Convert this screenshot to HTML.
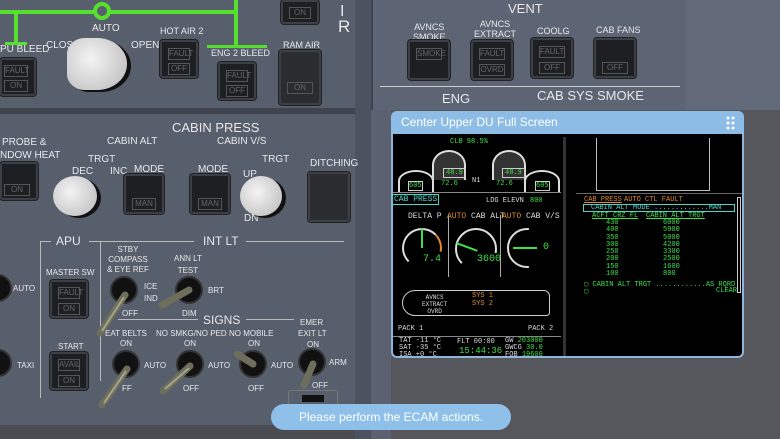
<!DOCTYPE html><html><head><style>
body{margin:0;width:780px;height:439px;overflow:hidden;background:#575e6c;font-family:"Liberation Sans",sans-serif;position:relative}
div,span{position:absolute;box-sizing:border-box}
.t{color:#e8e8ea;font-size:10px;white-space:nowrap}
.btn{background:#1d1f22;border:2px solid #3c3f45;border-radius:3px;box-shadow:0 0 0 1px #222}
.btn .a,.btn .b{left:6px;right:6px;border:1px solid #555;color:#666;font-size:8px;text-align:center;line-height:10px}
.knob{border-radius:50%;background:radial-gradient(circle at 40% 40%,#f4f4f4,#b8b8b8);box-shadow:4px 2px 0 #111}
.m{font-family:"Liberation Mono",monospace;font-size:7px;white-space:nowrap}
.g{color:#3ee04a}.o{color:#e08a2a}.w{color:#ddd}.c{color:#4cd6c9}
</style></head><body>
<!-- bottom right dark area -->
<div style="left:370px;top:110px;width:410px;height:329px;background:#56575c"></div>
<div style="left:0;top:425px;width:380px;height:14px;background:#4a4c52"></div>
<!-- panel seams -->
<div style="left:0;top:108px;width:375px;height:6px;background:#3e434d"></div>
<div style="left:355px;top:0;width:16px;height:439px;background:#4c5260"></div>
<div style="left:371px;top:0;width:409px;height:110px;background:#5d6474;border-left:2px solid #3f4450"></div>
<div style="left:371px;top:110px;width:20px;height:329px;background:#5b6170"></div>
<!-- green lines -->
<div style="left:0;top:10px;width:237px;height:4px;background:#55e030"></div>
<div style="left:234px;top:0;width:4px;height:46px;background:#55e030"></div>
<div style="left:207px;top:45px;width:60px;height:3px;background:#55e030"></div>
<div style="left:14px;top:12px;width:4px;height:30px;background:#55e030"></div>
<div style="left:5px;top:42px;width:22px;height:3px;background:#55e030"></div>
<div style="left:93px;top:2px;width:18px;height:18px;border:4px solid #55e030;border-radius:50%;background:#575e6c"></div>
<span class="t" style="left:92px;top:23px">AUTO</span>
<span class="t" style="left:46px;top:40px">CLOS</span><span class="t" style="left:131px;top:40px">OPEN</span>
<span class="t" style="left:0;top:44px">PU BLEED</span>
<span class="t" style="left:160px;top:26px;font-size:9px">HOT AIR 2</span>
<span class="t" style="left:211px;top:48px;font-size:9px">ENG 2 BLEED</span>
<span class="t" style="left:283px;top:40px;font-size:9px">RAM AIR</span>
<span class="t" style="left:340px;top:3px;font-size:16px">I</span><span class="t" style="left:338px;top:17px;font-size:17px">R</span>
<div class="btn" style="left:0;top:58px;width:36px;height:38px"><span class="a" style="top:5px;left:2px">FAULT</span><span class="b" style="top:20px;left:2px">ON</span></div>
<div class="knob" style="left:67px;top:38px;width:60px;height:52px;border-radius:30% 50% 50% 30%"></div>
<div class="btn" style="left:160px;top:40px;width:38px;height:38px"><span class="a" style="top:6px">FAULT</span><span class="b" style="top:21px">OFF</span></div>
<div class="btn" style="left:218px;top:62px;width:38px;height:38px"><span class="a" style="top:6px">FAULT</span><span class="b" style="top:21px">OFF</span></div>
<div class="btn" style="left:279px;top:50px;width:42px;height:55px;background:#2a2c30"><span class="b" style="top:30px">ON</span></div>
<div class="btn" style="left:281px;top:0;width:38px;height:24px"><span class="b" style="top:5px">ON</span></div>
<!-- cabin press -->
<span class="t" style="left:172px;top:120px;font-size:13px">CABIN PRESS</span>
<span class="t" style="left:107px;top:136px">CABIN ALT</span><span class="t" style="left:217px;top:136px">CABIN V/S</span>
<span class="t" style="left:2px;top:137px">PROBE &amp;</span><span class="t" style="left:0;top:150px">NDOW HEAT</span>
<span class="t" style="left:88px;top:154px">TRGT</span><span class="t" style="left:72px;top:166px">DEC</span><span class="t" style="left:110px;top:166px">INC</span>
<span class="t" style="left:134px;top:164px">MODE</span><span class="t" style="left:198px;top:164px">MODE</span>
<span class="t" style="left:262px;top:154px">TRGT</span><span class="t" style="left:243px;top:169px">UP</span><span class="t" style="left:244px;top:213px">DN</span>
<span class="t" style="left:310px;top:158px">DITCHING</span>
<div class="btn" style="left:0;top:162px;width:38px;height:38px"><span class="b" style="top:20px;left:2px">ON</span></div>
<div class="knob" style="left:53px;top:176px;width:44px;height:40px"></div>
<div class="btn" style="left:124px;top:174px;width:40px;height:40px"><span class="b" style="top:22px">MAN</span></div>
<div class="btn" style="left:190px;top:174px;width:40px;height:40px"><span class="b" style="top:22px">MAN</span></div>
<div class="knob" style="left:240px;top:176px;width:42px;height:40px"></div>
<div class="btn" style="left:308px;top:172px;width:42px;height:50px;background:#2a2c30"></div>
<!-- lower panel lines -->
<div style="left:40px;top:241px;width:1px;height:157px;background:#bbb"></div>
<div style="left:100px;top:241px;width:1px;height:140px;background:#bbb"></div>
<div style="left:40px;top:241px;width:11px;height:1px;background:#bbb"></div>
<div style="left:89px;top:241px;width:105px;height:1px;background:#bbb"></div>
<div style="left:246px;top:241px;width:98px;height:1px;background:#bbb"></div>
<div style="left:118px;top:319px;width:80px;height:1px;background:#bbb"></div>
<div style="left:246px;top:319px;width:48px;height:1px;background:#bbb"></div>
<span class="t" style="left:56px;top:234px;font-size:12px">APU</span><span class="t" style="left:203px;top:234px;font-size:12px">INT LT</span>
<span class="t" style="left:103px;top:245px;font-size:8px;line-height:10px;text-align:center;width:50px">STBY<br>COMPASS<br>&amp; EYE REF</span>
<span class="t" style="left:174px;top:253px;font-size:8px;line-height:12px;text-align:center">ANN LT<br>TEST</span>
<span class="t" style="left:46px;top:268px;font-size:8px">MASTER SW</span>
<div class="btn" style="left:50px;top:280px;width:38px;height:38px"><span class="a" style="top:5px">FAULT</span><span class="b" style="top:21px">ON</span></div>
<span class="t" style="left:144px;top:282px;font-size:8px">ICE</span><span class="t" style="left:144px;top:294px;font-size:8px">IND</span>
<span class="t" style="left:208px;top:286px;font-size:8px">BRT</span><span class="t" style="left:182px;top:309px;font-size:8px">DIM</span>
<span class="t" style="left:122px;top:309px;font-size:8px">OFF</span>
<span class="t" style="left:13px;top:284px;font-size:8px">AUTO</span>
<span class="t" style="left:203px;top:313px;font-size:12px">SIGNS</span>
<span class="t" style="left:105px;top:329px;font-size:8px">EAT BELTS</span><span class="t" style="left:156px;top:329px;font-size:8px">NO SMKG/NO PED</span><span class="t" style="left:229px;top:329px;font-size:8px">NO MOBILE</span>
<span class="t" style="left:300px;top:318px;font-size:8px">EMER</span><span class="t" style="left:298px;top:329px;font-size:8px">EXIT LT</span>
<span class="t" style="left:58px;top:342px;font-size:8px">START</span>
<div class="btn" style="left:50px;top:352px;width:38px;height:38px"><span class="a" style="top:5px">AVAIL</span><span class="b" style="top:21px">ON</span></div>
<span class="t" style="left:120px;top:339px;font-size:8px">ON</span><span class="t" style="left:184px;top:339px;font-size:8px">ON</span><span class="t" style="left:248px;top:339px;font-size:8px">ON</span><span class="t" style="left:307px;top:340px;font-size:8px">ON</span>
<span class="t" style="left:144px;top:361px;font-size:8px">AUTO</span><span class="t" style="left:208px;top:361px;font-size:8px">AUTO</span><span class="t" style="left:271px;top:361px;font-size:8px">AUTO</span><span class="t" style="left:329px;top:358px;font-size:8px">ARM</span>
<span class="t" style="left:17px;top:361px;font-size:8px">TAXI</span>
<span class="t" style="left:122px;top:384px;font-size:8px">FF</span><span class="t" style="left:183px;top:384px;font-size:8px">OFF</span><span class="t" style="left:248px;top:384px;font-size:8px">OFF</span><span class="t" style="left:312px;top:381px;font-size:8px">OFF</span>
<div style="left:288px;top:390px;width:50px;height:30px;border:1px solid #777;border-radius:3px"></div>
<div style="left:302px;top:395px;width:22px;height:7px;background:#111"></div>
<svg style="position:absolute;left:0;top:0" width="370" height="439">
<g fill="#111" stroke="#333" stroke-width="2">
<circle cx="124" cy="290" r="13"/><circle cx="189" cy="290" r="13"/>
<circle cx="126" cy="364" r="13"/><circle cx="190" cy="364" r="13"/><circle cx="253" cy="364" r="13"/><circle cx="312" cy="362" r="13"/>
<circle cx="-2" cy="288" r="13"/><circle cx="-2" cy="363" r="13"/>
</g>
<g stroke="#6e6e5c" stroke-width="7" stroke-linecap="round">
<line x1="125" y1="295" x2="100" y2="333"/><line x1="189" y1="290" x2="162" y2="305"/>
<line x1="127" y1="369" x2="102" y2="405"/><line x1="190" y1="366" x2="163" y2="391"/>
<line x1="253" y1="364" x2="237" y2="354"/><line x1="313" y1="364" x2="304" y2="385"/>
</g>
<g stroke="#a5a58e" stroke-width="2"><line x1="124" y1="297" x2="102" y2="331"/><line x1="126" y1="371" x2="104" y2="403"/><line x1="189" y1="368" x2="165" y2="389"/></g>
</svg>
<!-- vent panel -->
<span class="t" style="left:508px;top:1px;font-size:13px">VENT</span>
<span class="t" style="left:413px;top:22px;text-align:center;font-size:9px;line-height:10px">AVNCS<br>SMOKE</span>
<span class="t" style="left:474px;top:19px;text-align:center;font-size:9px;line-height:10px">AVNCS<br>EXTRACT</span>
<span class="t" style="left:537px;top:26px;font-size:9px">COOLG</span><span class="t" style="left:596px;top:25px;font-size:9px">CAB FANS</span>
<div class="btn" style="left:408px;top:40px;width:42px;height:40px"><span class="a" style="top:6px">SMOKE</span></div>
<div class="btn" style="left:471px;top:40px;width:42px;height:40px"><span class="a" style="top:6px">FAULT</span><span class="b" style="top:22px">OVRD</span></div>
<div class="btn" style="left:531px;top:38px;width:42px;height:40px"><span class="a" style="top:6px">FAULT</span><span class="b" style="top:22px">OFF</span></div>
<div class="btn" style="left:594px;top:38px;width:42px;height:40px"><span class="b" style="top:22px">OFF</span></div>
<div style="left:380px;top:86px;width:300px;height:1px;background:#ccc"></div>
<span class="t" style="left:442px;top:91px;font-size:13px">ENG</span><span class="t" style="left:537px;top:88px;font-size:13px">CAB SYS SMOKE</span>
<div style="left:686px;top:0;width:94px;height:110px;background:#626a7a"></div>
<!-- display window -->
<div style="left:391px;top:111px;width:353px;height:247px;background:#000;border:2px solid #8fb6d8;border-top:none;border-radius:6px"></div>
<div style="left:391px;top:111px;width:353px;height:23px;background:#8dbde6;border-radius:6px 6px 0 0"></div>
<span style="left:401px;top:115px;color:#fff;font-size:12px">Center Upper DU Full Screen</span>
<svg style="position:absolute;left:726px;top:116px" width="10" height="14" fill="#fff"><circle cx="2" cy="2" r="1.5"/><circle cx="7" cy="2" r="1.5"/><circle cx="2" cy="7" r="1.5"/><circle cx="7" cy="7" r="1.5"/><circle cx="2" cy="12" r="1.5"/><circle cx="7" cy="12" r="1.5"/></svg>
<div style="left:563px;top:137px;width:3px;height:219px;background:#333"></div>
<!-- engine area -->
<span class="m g" style="left:450px;top:138px">CLB 98.5%</span>
<div style="left:432px;top:150px;width:34px;height:30px;border:2px solid #ddd;border-bottom:none;border-radius:50% 50% 0 0;background:#333"></div>
<div style="left:492px;top:150px;width:34px;height:30px;border:2px solid #ddd;border-bottom:none;border-radius:50% 50% 0 0;background:#333"></div>
<span class="m g" style="left:443px;top:168px;border:1px solid #ccc;padding:0 2px">48.9</span><span class="m g" style="left:502px;top:168px;border:1px solid #ccc;padding:0 2px">48.9</span>
<div style="left:398px;top:170px;width:36px;height:22px;border:2px solid #ddd;border-bottom:none;border-radius:50% 50% 0 0"></div>
<div style="left:524px;top:170px;width:36px;height:22px;border:2px solid #ddd;border-bottom:none;border-radius:50% 50% 0 0"></div>
<span class="m g" style="left:408px;top:181px;border:1px solid #ccc">605</span><span class="m g" style="left:535px;top:181px;border:1px solid #ccc">605</span>
<span class="m g" style="left:441px;top:180px">72.6</span><span class="m g" style="left:496px;top:180px">72.6</span><span class="m w" style="left:472px;top:177px">N1</span>
<div style="left:393px;top:192px;width:168px;height:1px;background:#888"></div>
<span class="m c" style="left:392px;top:194px;font-size:8px;border:1px solid #4cd6c9;padding:0 1px">CAB PRESS</span>
<span class="m w" style="left:486px;top:197px">LDG ELEVN</span><span class="m g" style="left:530px;top:197px">800</span>
<span class="m w" style="left:408px;top:212px;font-size:8px">DELTA P</span>
<span class="m" style="left:447px;top:212px;font-size:8px"><span style="position:static" class="o">AUTO</span> <span style="position:static" class="w">CAB ALT</span></span>
<span class="m" style="left:502px;top:212px;font-size:8px"><span style="position:static" class="o">AUTO</span> <span style="position:static" class="w">CAB V/S</span></span>
<div style="left:402px;top:228px;width:40px;height:40px;border:2px solid #ddd;border-radius:50%;border-right-color:#e08a2a;clip-path:polygon(0 0,100% 0,100% 60%,50% 50%,0 100%)"></div>
<div style="left:421px;top:228px;width:2px;height:20px;background:#3ee04a"></div>
<span class="m g" style="left:423px;top:254px;font-size:10px">7.4</span>
<div style="left:455px;top:228px;width:42px;height:42px;border:2px solid #ddd;border-radius:50%;clip-path:polygon(0 0,100% 0,100% 60%,50% 50%,0 100%)"></div>
<div style="left:456px;top:246px;width:22px;height:2px;background:#3ee04a;transform:rotate(20deg)"></div>
<span class="m g" style="left:477px;top:254px;font-size:10px">3600</span>
<div style="left:507px;top:228px;width:40px;height:40px;border:2px solid #ddd;border-radius:50%;clip-path:polygon(0 0,55% 0,50% 50%,55% 100%,0 100%)"></div>
<div style="left:513px;top:247px;width:24px;height:2px;background:#3ee04a"></div>
<span class="m g" style="left:543px;top:242px;font-size:10px">0</span>
<div style="left:448px;top:215px;width:1px;height:62px;background:#aaa"></div><div style="left:500px;top:215px;width:1px;height:62px;background:#aaa"></div>
<div style="left:402px;top:290px;width:148px;height:26px;border:1px solid #ccc;border-radius:30px 14px 8px 30px"></div>
<span class="m w" style="left:422px;top:294px;font-size:6px;text-align:center">AVNCS<br>EXTRACT<br>OVRD</span>
<span class="m o" style="left:472px;top:292px">SYS 1<br>SYS 2</span>
<span class="m w" style="left:398px;top:325px">PACK 1</span><span class="m w" style="left:528px;top:325px">PACK 2</span>
<div style="left:393px;top:336px;width:168px;height:1px;background:#888"></div>
<span class="m w" style="left:399px;top:338px;line-height:7px">TAT -11 °C<br>SAT -35 °C<br>ISA +0 °C</span>
<span class="m w" style="left:457px;top:338px">FLT 00:00</span><span class="m g" style="left:459px;top:346px;font-size:9px">15:44:36</span>
<span class="m w" style="left:505px;top:338px;line-height:7px">GW <span class="g" style="position:static">203000</span><br>GWCG <span class="g" style="position:static">30.0</span><br>FOB <span class="g" style="position:static">19600</span></span>
<!-- right ecam -->
<div style="left:596px;top:138px;width:1px;height:53px;background:#bbb"></div><div style="left:709px;top:138px;width:1px;height:53px;background:#bbb"></div>
<div style="left:596px;top:190px;width:114px;height:1px;background:#bbb"></div>
<div style="left:576px;top:193px;width:166px;height:1px;background:#666"></div>
<span class="m o" style="left:584px;top:196px;text-decoration:underline">CAB PRESS</span><span class="m o" style="left:624px;top:196px">AUTO CTL FAULT</span>
<div style="left:583px;top:204px;width:152px;height:8px;border:1px solid #4cd6c9"></div>
<span class="m c" style="left:591px;top:204px">CABIN ALT MODE .............MAN</span>
<span class="m g" style="left:592px;top:212px;text-decoration:underline">ACFT CRZ FL</span><span class="m g" style="left:646px;top:212px;text-decoration:underline">CABIN ALT TRGT</span>
<span class="m g" style="left:606px;top:220px;line-height:7.3px">430<br>400<br>350<br>300<br>250<br>200<br>150<br>100</span>
<span class="m g" style="left:663px;top:220px;line-height:7.3px">6000<br>5900<br>5000<br>4200<br>3300<br>2500<br>1600<br>800</span>
<span class="m g" style="left:584px;top:280px">▢ CABIN ALT TRGT ............AS RQRD</span>
<span class="m g" style="left:584px;top:287px">▢</span><span class="m g" style="left:716px;top:287px">CLEAR</span>
<div style="left:737px;top:197px;width:4px;height:96px;border:1px solid #ccc"></div>
<!-- notice -->
<div style="left:271px;top:404px;width:240px;height:26px;background:#8ec0ea;border-radius:13px"></div>
<span style="left:271px;top:410px;width:240px;text-align:center;color:#fff;font-size:12px">Please perform the ECAM actions.</span>
</body></html>
